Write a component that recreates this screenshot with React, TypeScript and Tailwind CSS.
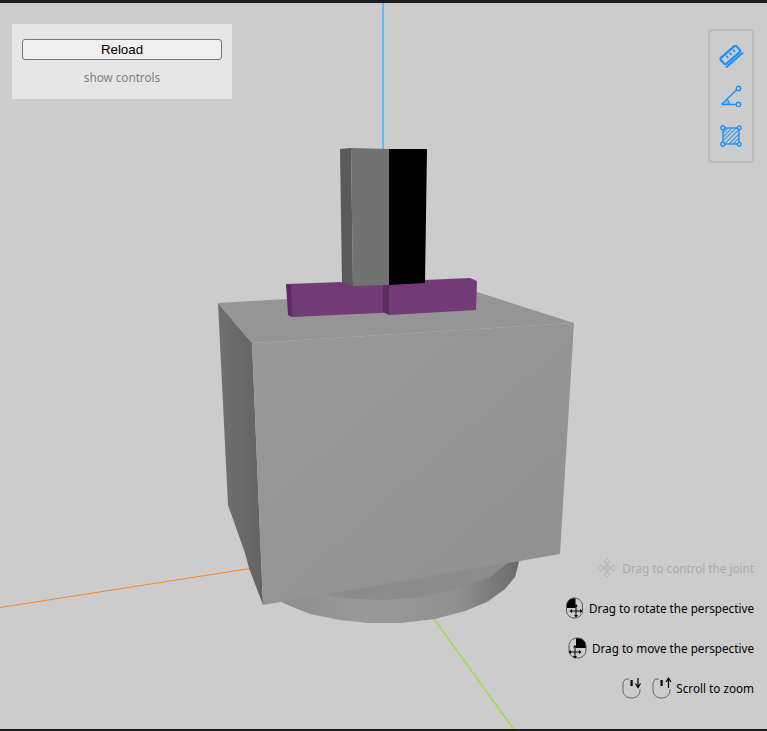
function MoveIcon() {
  return (
    <svg width="20" height="20" viewBox="0 0 20 20" fill="none" stroke="#b4b4b4" strokeWidth="1">
      <path d="M8 6 H12 V8 H14 V12 H12 V14 H8 V12 H6 V8 H8 Z" fill="#bdbdbd" stroke="none" />
      <path d="M10 0.7 L13.2 4 L11.6 5 H8.4 L6.8 4 Z" />
      <path d="M10 19.3 L13.2 16 L11.6 15 H8.4 L6.8 16 Z" />
      <path d="M0.7 10 L4 6.8 L5 8.4 V11.6 L4 13.2 Z" />
      <path d="M19.3 10 L16 6.8 L15 8.4 V11.6 L16 13.2 Z" />
    </svg>
  );
}

function Cross({ cx, cy }: { cx: number; cy: number }) {
  return (
    <g transform={`translate(${cx} ${cy})`}>
      <path d="M0 -6 V5.5 M-5.5 0 H5.5" stroke="#000" strokeWidth="1" fill="none" />
      <path d="M0 -7 L-2 -4.5 H2 Z M0 6.5 L-2 4 H2 Z M-6.5 0 L-4 -2 V2 Z M6.5 0 L4 -2 V2 Z" fill="#000" />
    </g>
  );
}

function MouseLeft() {
  return (
    <svg width="17" height="22" viewBox="0 0 17 22" fill="none">
      <path d="M0.5 11 V9 C0.5 4.5 4 1 8 1 H9.5 V11 Z" fill="#000" />
      <path d="M0.5 9 C0.5 4.5 4 1 8.5 1 C13 1 16.5 4.5 16.5 9 V13 C16.5 18 13 21 8.5 21 C4 21 0.5 18 0.5 13 Z" stroke="#555" strokeWidth="1" />
      <Cross cx={10} cy={14} />
    </svg>
  );
}

function MouseRight() {
  return (
    <svg width="19" height="22" viewBox="0 0 19 22" fill="none">
      <path d="M8 1 H10 C14.5 1 18 4.5 18 9 V11 H8 Z" fill="#000" />
      <path d="M1 9 C1 4.5 4.5 1 9.5 1 C14 1 18 4.5 18 9 V13 C18 18 14 21 9.5 21 C5 21 1 18 1 13 Z" stroke="#555" strokeWidth="1" />
      <Cross cx={7} cy={15} />
    </svg>
  );
}

function MouseScroll({ up }: { up?: boolean }) {
  return (
    <svg width="20" height="22" viewBox="0 0 20 22" fill="none">
      <path d="M7 2 H5 C2.5 2 1 4.5 1 7 V13 C1 18 4.5 21 9.5 21 C14.5 21 18 18 18 13 V12" stroke="#666" strokeWidth="1" />
      <rect x="8.5" y="3" width="2.2" height="6" fill="#000" />
      {up ? (
        <path d="M16.5 11 V1.5 M14 5 L16.5 1.2 L19 5" stroke="#000" strokeWidth="1.2" />
      ) : (
        <path d="M16 1 V10 M13.5 6.5 L16 10.5 L18.5 6.5" stroke="#000" strokeWidth="1.2" />
      )}
    </svg>
  );
}

function Ruler() {
  return (
    <svg width="26" height="26" viewBox="0 0 26 26" fill="none" stroke="#1890ff" strokeWidth="2.2">
      <path d="M3.2 14.6 L16 3.4 C17 2.6 18 2.7 18.7 3.5 L21.6 6.8 C22.3 7.7 22.2 8.6 21.4 9.3 L8.4 20.6 C7.5 21.3 6.6 21.2 5.9 20.4 L3 17.2 C2.3 16.4 2.4 15.4 3.2 14.6 Z" />
      <path d="M8.2 12.6 L10.2 15 M11.6 9.6 L13.6 12 M15 6.6 L17 9" strokeWidth="1.6" />
      <path d="M8 24.5 L25 9.5" strokeWidth="2.2" />
    </svg>
  );
}

function Angle() {
  return (
    <svg width="22" height="22" viewBox="0 0 22 22" fill="none" stroke="#1890ff" strokeWidth="1.4">
      <path d="M1.5 19.5 H16.5 M1.5 19.5 L17 4.5" />
      <path d="M6.8 14.3 C8.6 15.6 9.4 17.4 9.4 19.5" />
      <path d="M3 19 L6.5 15.5 C7.6 16.4 8.2 17.6 8.4 19 Z" fill="#1890ff" fillOpacity="0.35" stroke="none" />
      <circle cx="18.5" cy="3.5" r="2.2" />
      <circle cx="18.5" cy="19.5" r="2.2" />
    </svg>
  );
}

function AreaIcon() {
  return (
    <svg width="22" height="22" viewBox="0 0 22 22" fill="none" stroke="#1890ff">
      <rect x="3" y="3" width="16" height="16" strokeWidth="1.4" />
      <path d="M3.5 7.5 L7.5 3.5 M3.5 11.5 L11.5 3.5 M3.5 15.5 L15.5 3.5 M5.5 18 L18 5.5 M9.5 18.5 L18.5 9.5 M13.5 18.5 L18.5 13.5" strokeWidth="1.3" opacity="0.75" />
      <g fill="#cccccc" strokeWidth="1.4">
        <rect x="1" y="1" width="3.6" height="3.6" rx="1" />
        <rect x="17.4" y="1" width="3.6" height="3.6" rx="1.8" />
        <rect x="1" y="17.4" width="3.6" height="3.6" rx="1" />
        <rect x="17.4" y="17.4" width="3.6" height="3.6" rx="1.8" />
      </g>
    </svg>
  );
}

function Scene() {
  return (
    <svg className="absolute inset-0" width="767" height="731" viewBox="0 0 767 731">
      <defs>
        <linearGradient id="front" x1="0" y1="0" x2="1" y2="1">
          <stop offset="0" stopColor="#999999" />
          <stop offset="1" stopColor="#909090" />
        </linearGradient>
        <linearGradient id="left" x1="0" y1="0" x2="1" y2="0">
          <stop offset="0" stopColor="#707070" />
          <stop offset="1" stopColor="#636363" />
        </linearGradient>
        <linearGradient id="cyl" x1="0" y1="0" x2="1" y2="0">
          <stop offset="0" stopColor="#8c8c8c" />
          <stop offset="0.4" stopColor="#999999" />
          <stop offset="0.75" stopColor="#909090" />
          <stop offset="1" stopColor="#6a6a6a" />
        </linearGradient>
      </defs>
      <line x1="383" y1="0" x2="383" y2="150" stroke="#66bbee" strokeWidth="2" />
      <line x1="0" y1="607.5" x2="250" y2="568.5" stroke="#f58a1f" strokeWidth="1.2" />
      <line x1="434" y1="619" x2="515" y2="731" stroke="#8ee61e" strokeWidth="1.2" />
      {/* cylinder */}
      <path d="M270 590 L283 603 L310 614 L340 620 L368 623 L400 623 L435 619 L465 611 L487 602 L505 589 L515 577 L519 562 L500 540 L300 570 Z" fill="url(#cyl)" />
      <path d="M300 590 L325 595 L355 599 L383 600 L415 598 L445 592 L470 585 L490 577 L508 563 L500 550 L300 570 Z" fill="#8c8c8c" />
      {/* big box */}
      <polygon points="218,303 252,343 263,605 249,568 245,553 228,505" fill="url(#left)" />
      <polygon points="218,303 286,299 477,292 574,323 252,343" fill="#959595" />
      <polygon points="252,343 574,323 560,554 263,605" fill="url(#front)" />
      {/* purple bar */}
      <polygon points="286,284 343,282 400,281 400,312 292,317" fill="#733a78" />
      <polygon points="286,284 291,285 292,317 288,315" fill="#5c2c61" />
      <polygon points="384,284 425,280 470,278 477,281 476,310 389,315" fill="#733a78" />
      <polygon points="383,285 389,285 389,315 383,312" fill="#5c2c61" />
      {/* post */}
      <polygon points="340,149 351,148 353,286 342,282" fill="#5a5a5a" />
      <polygon points="351,148 389,149 389,285 353,286" fill="#727272" />
      <polygon points="389,149 427,149 425,283 389,285" fill="#000000" />
    </svg>
  );
}

const textCls = "text-[11.7px] leading-[16px] text-black whitespace-nowrap";

export default function App() {
  return (
    <div className="relative w-[767px] h-[731px] overflow-hidden bg-[#cccccc] font-['Noto_Sans',sans-serif]">
      <Scene />
      <div className="absolute top-0 left-0 right-0 h-[3px] bg-[#1d1d1d]" />
      <div className="absolute bottom-0 left-0 right-0 h-[2px] bg-[#1d1d1d]" />

      <div className="absolute left-3 top-6 w-[220px] h-[75px] bg-[#e6e6e6] px-2.5 pt-[15px] flex flex-col items-center">
        <button className="w-[200px] h-[21px] rounded-[3px] border border-[#767676] bg-[#efefef] text-[13.33px] leading-none text-black font-['Liberation_Sans',sans-serif]">
          Reload
        </button>
        <div className="mt-[9px] text-[11.7px] leading-[16px] text-[#7f7f7f]">show controls</div>
      </div>

      <div className="absolute left-[708px] top-[29px] w-[46px] h-[134px] rounded-[4px] border-2 border-[#bababa] flex flex-col items-center pt-[5px]">
        <div className="h-10 flex items-center justify-center"><Ruler /></div>
        <div className="h-10 flex items-center justify-center"><Angle /></div>
        <div className="h-10 flex items-center justify-center"><AreaIcon /></div>
      </div>

      <div className="absolute right-[13px] top-[558px] flex flex-col items-end">
        <div className="h-[20px] flex items-center gap-[5px] text-[11.7px] leading-[16px] text-[#aaaaaa] whitespace-nowrap">
          <MoveIcon />
          <span>Drag to control the joint</span>
        </div>
        <div className={`mt-[20px] h-[20px] flex items-center gap-[6px] ${textCls}`}>
          <MouseLeft />
          <span>Drag to rotate the perspective</span>
        </div>
        <div className={`mt-[20px] h-[20px] flex items-center gap-[5px] ${textCls}`}>
          <MouseRight />
          <span>Drag to move the perspective</span>
        </div>
        <div className={`mt-[20px] h-[20px] flex items-center ${textCls}`}>
          <MouseScroll />
          <span className="w-[10px]" />
          <MouseScroll up />
          <span className="ml-[4px]">Scroll to zoom</span>
        </div>
      </div>
    </div>
  );
}
